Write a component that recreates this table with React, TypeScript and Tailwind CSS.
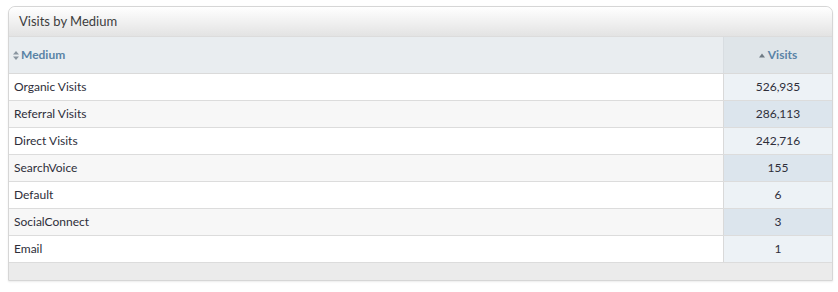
import React from "react";

const rows: [string, string][] = [
  ["Organic Visits", "526,935"],
  ["Referral Visits", "286,113"],
  ["Direct Visits", "242,716"],
  ["SearchVoice", "155"],
  ["Default", "6"],
  ["SocialConnect", "3"],
  ["Email", "1"],
];

export default function App() {
  return (
    <div
      className="w-[838px] h-[292px] bg-white pt-[6px] pl-[8px]"
      style={{ fontFamily: "Lato, 'Liberation Sans', sans-serif" }}
    >
      <div className="w-[825px] border border-[#d6d6d6] rounded-t-[7px] shadow-[0_1px_2px_rgba(0,0,0,0.08)]">
        <div className="h-[30px] rounded-t-[7px] bg-gradient-to-b from-white to-[#e3e3e3] flex items-center pl-[10px] text-[13px] text-[#3d3d3d] border-b border-[#dcdcdc]">
          Visits by Medium
        </div>
        <div className="flex h-[37px] bg-[#e9edf0] border-b border-[#dadada] text-[12px] font-bold text-[#5a83a6]">
          <div className="flex-1 flex items-center pl-[4px] border-r border-[#d8dde1]">
            <svg width="6" height="9" viewBox="0 0 6 9" className="mr-[2px]">
              <path d="M3 0 L6 3.5 H0 Z" fill="#8a96a0" />
              <path d="M3 9 L6 5.5 H0 Z" fill="#8a96a0" />
            </svg>
            Medium
          </div>
          <div className="w-[108px] flex items-center justify-center bg-[#dfe5e9]">
            <svg width="6" height="5" viewBox="0 0 6 5" className="mr-[3px]">
              <path d="M3 0.5 L6 4.5 H0 Z" fill="#6f7a84" />
            </svg>
            Visits
          </div>
        </div>
        {rows.map(([name, val], i) => (
          <div
            key={name}
            className={`flex h-[27px] border-b border-[#dcdcdc] text-[12px] text-[#2e2e3a] ${
              i % 2 === 0 ? "bg-white" : "bg-[#f7f7f7]"
            }`}
          >
            <div className="flex-1 flex items-center pl-[5px] border-r border-[#d9d9d9]">
              {name}
            </div>
            <div
              className={`w-[108px] flex items-center justify-center ${
                i % 2 === 0 ? "bg-[#edf2f6]" : "bg-[#dce5ed]"
              }`}
            >
              {val}
            </div>
          </div>
        ))}
        <div className="h-[17px] bg-[#ebebeb]" />
      </div>
    </div>
  );
}
